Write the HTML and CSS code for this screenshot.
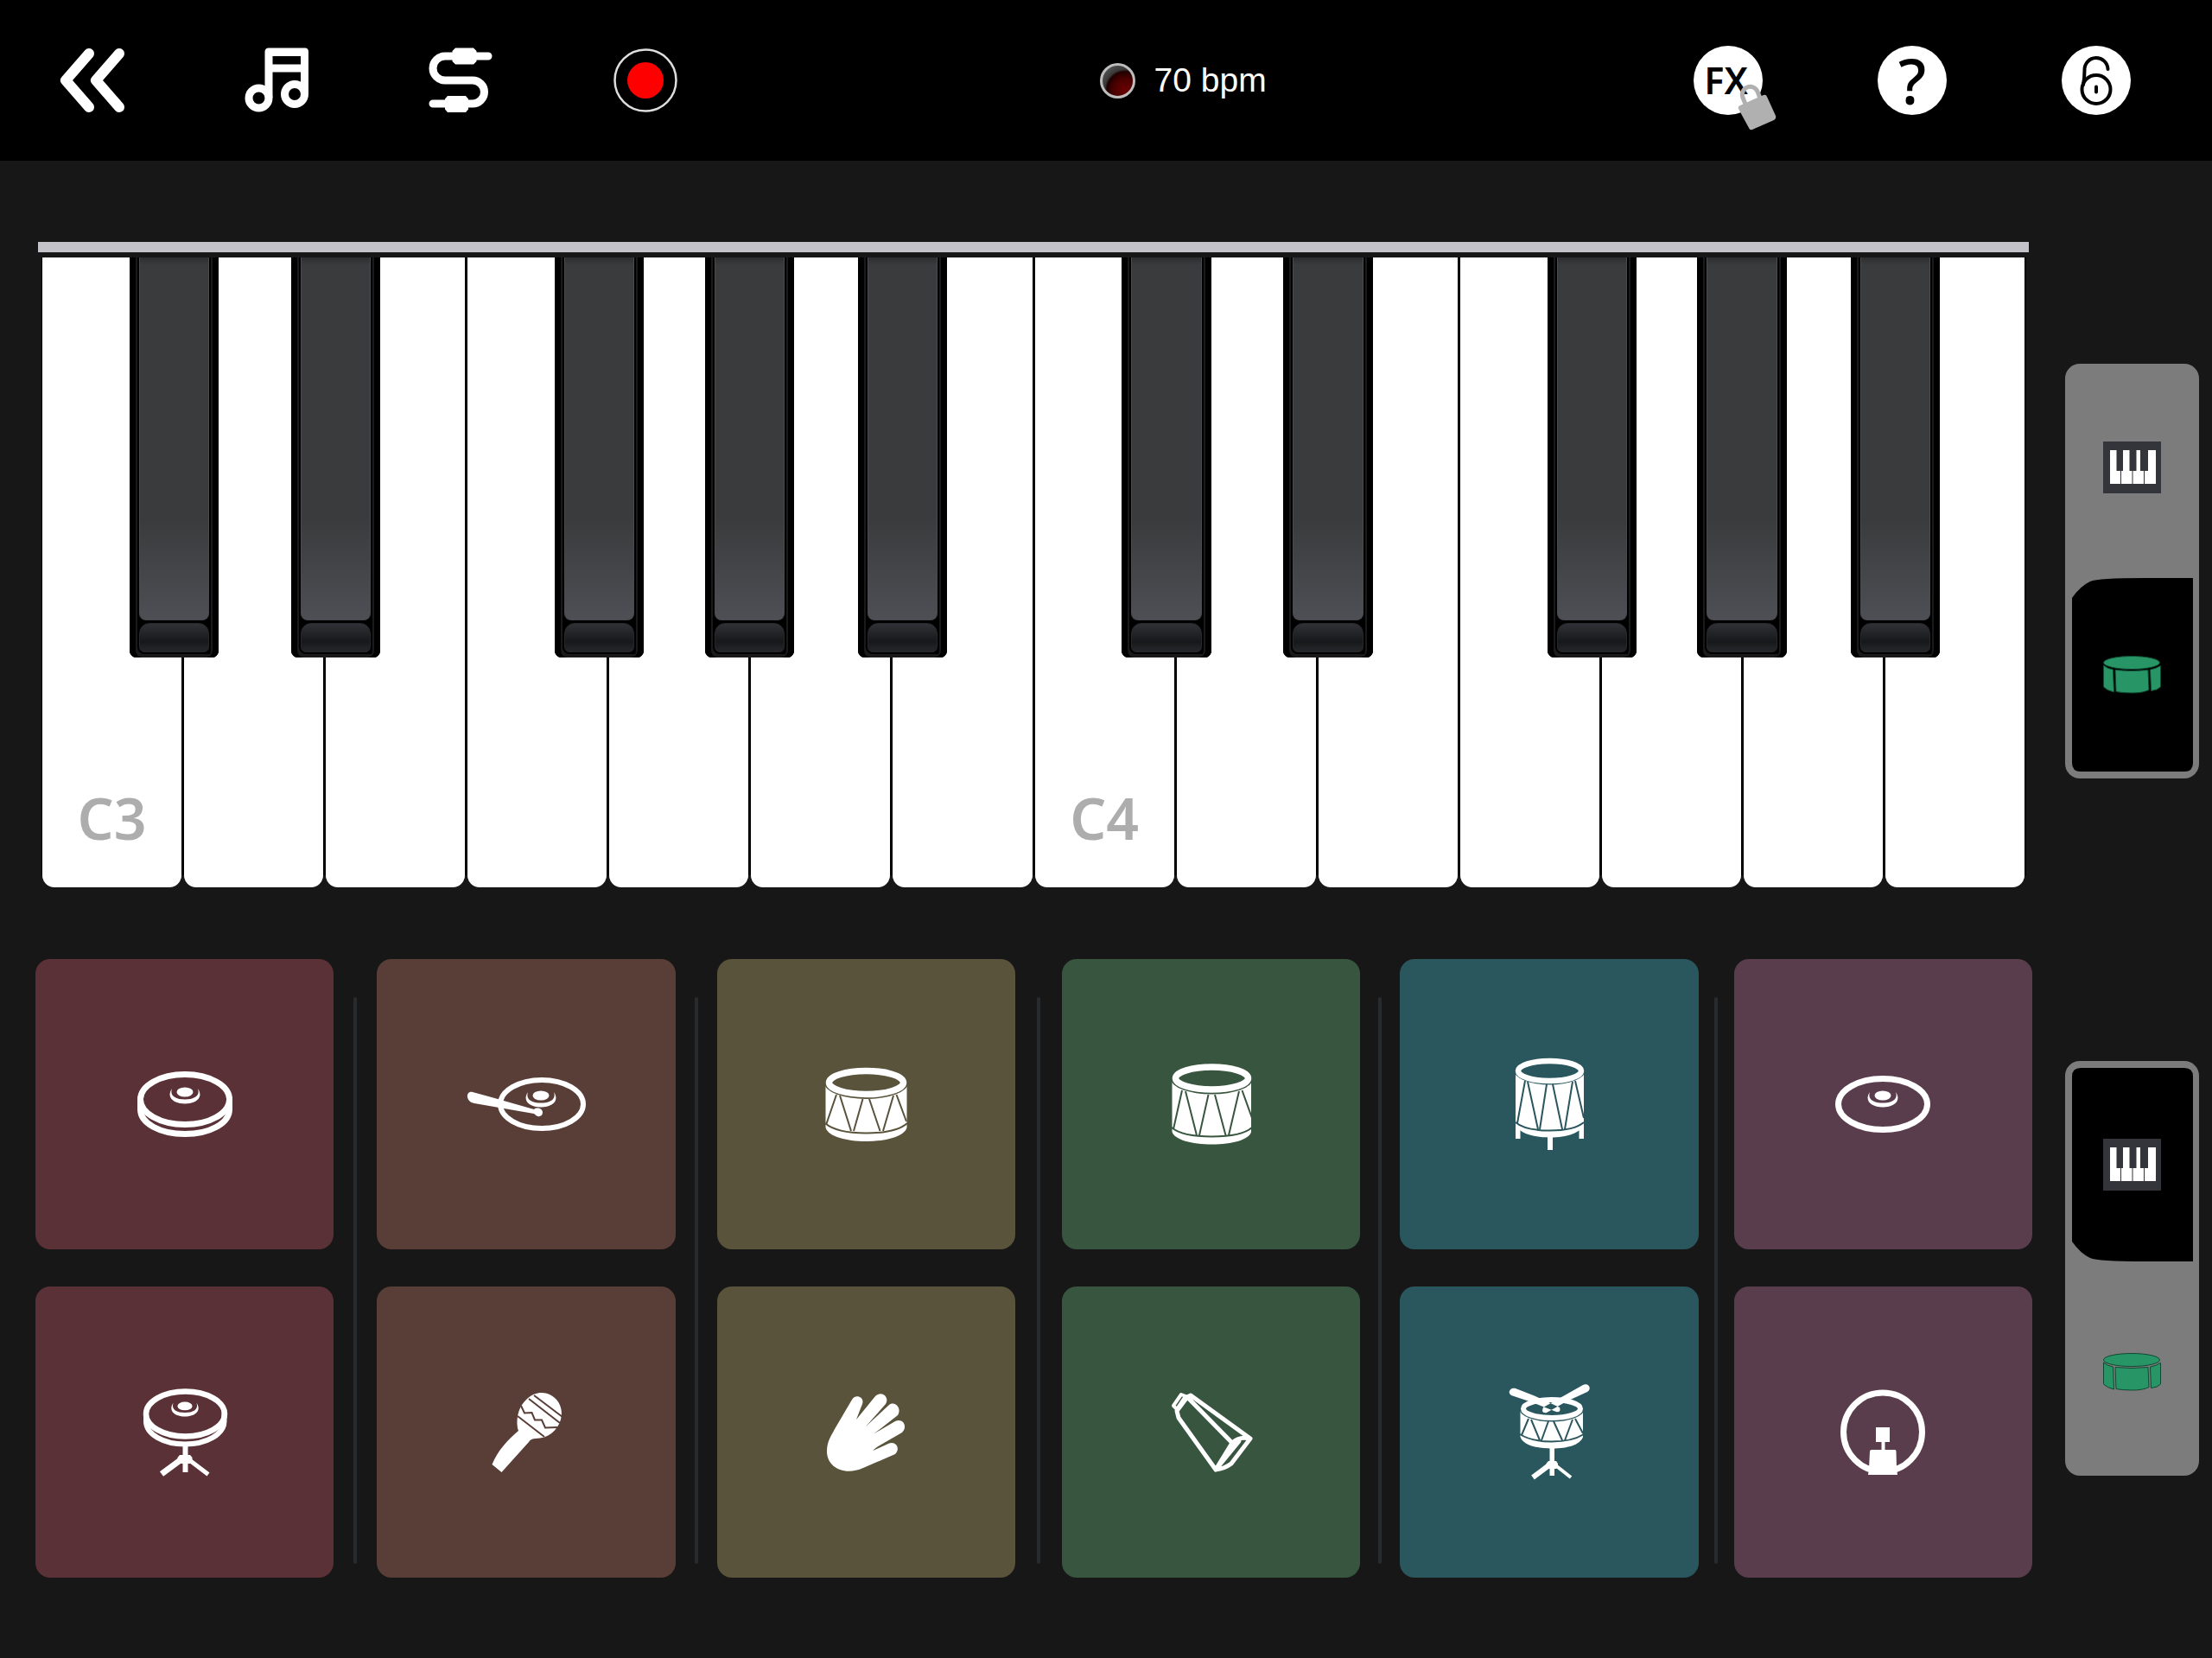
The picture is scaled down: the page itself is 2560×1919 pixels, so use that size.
FILE: index.html
```html
<!DOCTYPE html>
<html lang="en">
<head>
<meta charset="UTF-8" />
<meta name="viewport" content="width=device-width, initial-scale=1" />
<title>Piano and Drums</title>
<link rel="stylesheet" href="styles.css">
</head>
<body>
  <header class="toolbar">
    <div class="tools">
      <button class="tool" aria-label="Back">
        <svg class="tool-icon" viewBox="0 0 80 80"><path class="line" stroke-width="12" d="M36 9L9 40L36 71M71 9L44 40L71 71" /></svg>
      </button>
      <button class="tool" aria-label="Songs">
        <svg class="tool-icon" viewBox="0 0 80 80">
          <path d="M31 2.500H73Q77 2.500 77 7V56H68V30.500H35.500V60H26.500V7Q26.500 2.500 31 2.500ZM35.500 12V21.500H68V12Z" fill-rule="evenodd" />
          <circle class="line" cx="19.500" cy="60.500" r="11.500" stroke-width="9" />
          <circle class="line" cx="61" cy="56" r="11.500" stroke-width="9" />
        </svg>
      </button>
      <button class="tool" aria-label="MIDI connection">
        <svg class="tool-icon" viewBox="0 0 80 80">
          <path class="line" stroke-width="9" d="M34 12H22A14 14 0 0 0 22 40H54A13.500 13.500 0 0 1 54 67H8M34 12H72" />
          <path d="M34 2.500H55L58.500 6V18L55 21.500H34L30.500 18V6ZM25 58H46L49 61.500V73.500L46 77H25L22 73.500V61.500Z" />
        </svg>
      </button>
      <button class="tool" aria-label="Record">
        <svg class="tool-icon" viewBox="0 0 80 80">
          <circle class="line record-ring" cx="40" cy="40" r="35.500" stroke-width="2.500" />
          <circle class="record-dot" cx="40" cy="40" r="21" />
        </svg>
      </button>
    </div>

    <button class="tempo"><span class="led"></span>70 bpm</button>

    <div class="tools tools-right">
      <button class="tool" aria-label="Effects">
        <span class="disc fx">FX
          <svg class="fx-lock" viewBox="0 0 50 56">
            <path d="M13 26L9 16A9 9 0 0 1 26 9L30 19" fill="none" stroke="#b0b0b0" stroke-width="5" />
            <path d="M6 25L33 13Q36 12 37 15L47 37Q48 40 45 42L20 53Q17 54 16 51L4 29Q3 26 6 25Z" fill="#b0b0b0" />
          </svg>
        </span>
      </button>
      <button class="tool" aria-label="Help"><span class="disc help">?</span></button>
      <button class="tool" aria-label="Lock">
        <span class="disc">
          <svg class="tool-icon" viewBox="0 0 80 80">
            <g fill="none" stroke="#000" stroke-width="4" stroke-linecap="round">
              <circle cx="40" cy="50.500" r="16.500" />
              <path d="M25 45C26 40 26.500 36 26.500 28A13.500 13.500 0 0 1 53.500 27M40 47.500V53.500" />
            </g>
          </svg>
        </span>
      </button>
    </div>
  </header>

  <main>
    <section class="row row-piano">
      <div class="instrument">
        <div class="shelf"></div>
        <div class="keys">
          <div class="slot"><button class="white" aria-label="C3">C3</button><button class="black near" aria-label="C#3"><span class="top"></span><span class="lip"></span></button></div>
          <div class="slot"><button class="white" aria-label="D3"></button><button class="black far" aria-label="D#3"><span class="top"></span><span class="lip"></span></button></div>
          <div class="slot"><button class="white" aria-label="E3"></button></div>
          <div class="slot"><button class="white" aria-label="F3"></button><button class="black near" aria-label="F#3"><span class="top"></span><span class="lip"></span></button></div>
          <div class="slot"><button class="white" aria-label="G3"></button><button class="black mid" aria-label="G#3"><span class="top"></span><span class="lip"></span></button></div>
          <div class="slot"><button class="white" aria-label="A3"></button><button class="black far" aria-label="A#3"><span class="top"></span><span class="lip"></span></button></div>
          <div class="slot"><button class="white" aria-label="B3"></button></div>
          <div class="slot"><button class="white" aria-label="C4">C4</button><button class="black near" aria-label="C#4"><span class="top"></span><span class="lip"></span></button></div>
          <div class="slot"><button class="white" aria-label="D4"></button><button class="black far" aria-label="D#4"><span class="top"></span><span class="lip"></span></button></div>
          <div class="slot"><button class="white" aria-label="E4"></button></div>
          <div class="slot"><button class="white" aria-label="F4"></button><button class="black near" aria-label="F#4"><span class="top"></span><span class="lip"></span></button></div>
          <div class="slot"><button class="white" aria-label="G4"></button><button class="black mid" aria-label="G#4"><span class="top"></span><span class="lip"></span></button></div>
          <div class="slot"><button class="white" aria-label="A4"></button><button class="black far" aria-label="A#4"><span class="top"></span><span class="lip"></span></button></div>
          <div class="slot"><button class="white" aria-label="B4"></button></div>
        </div>
      </div>

      <div class="switch">
        <button class="option" aria-label="Piano on top" aria-pressed="false">
          <svg class="mini" viewBox="0 0 67 60">
            <g id="mini-piano">
              <rect width="67" height="60" fill="#34353a" />
              <path fill="#fff" d="M8 10H20V49H8ZM21 10H33.500V49H21ZM34.500 10H47V49H34.500ZM48 10H61V49H48Z" />
              <path fill="#34353a" d="M15.500 9H23V34H15.500ZM30.500 9H38.500V34H30.500ZM43 9H52V34H43Z" />
            </g>
          </svg>
        </button>
        <button class="option" aria-label="Drums on top" aria-pressed="true">
          <svg class="knob" viewBox="0 0 140 224" preserveAspectRatio="none"><path d="M0 23Q10 9 21 4Q30 0 84 0H140V214Q140 224 130 224H10Q0 224 0 214Z" /></svg>
          <svg class="mini" viewBox="0 0 67 60">
            <g id="mini-drum" fill="#289566" stroke="#0e4a31" stroke-width="1">
              <ellipse cx="33" cy="16" rx="32.500" ry="7.500" />
              <path d="M0.500 19Q5 23 11.500 24L12.500 50Q4 48 0.500 44Z" />
              <path d="M14 24.500Q33 26.500 52 24.500L53 47.500Q46 51 34 51Q22 51 15 49.500Z" />
              <path d="M54.500 24Q61 23 66.500 19.500V44Q63 48 55.500 48.500Z" />
            </g>
          </svg>
        </button>
      </div>
    </section>

    <section class="row row-pads">
      <div class="instrument pads">
        <button class="pad red" aria-label="Closed hi-hat">
          <svg class="pad-icon" viewBox="0 0 160 120">
            <path class="line" stroke-width="7" d="M28.500 54V66C28.500 82 51 94.500 80 94.500S131.500 82 131.500 66V54" />
            <ellipse class="line" cx="80" cy="54.500" rx="51.500" ry="29" stroke-width="7" />
            <g id="bell">
              <ellipse cx="80" cy="46" rx="9.500" ry="5.500" />
              <path d="M65 42C58 52 67 59.500 80 59.500S102 52 95 42C98 51 90 54.500 80 54.500S62 51 65 42Z" />
            </g>
          </svg>
        </button>
        <span class="divider"></span>
        <button class="pad brown" aria-label="Ride">
          <svg class="pad-icon" viewBox="0 0 160 120">
            <ellipse class="line" cx="98" cy="60" rx="48" ry="28" stroke-width="6" />
            <use href="#bell" x="17" y="4" />
            <path d="M18 46L40 52L89 66C92 63 99 65 99 69.500C99 74 95 75 92 73.500L89 71L20 59C9 57 10 44 18 46Z" />
          </svg>
        </button>
        <span class="divider"></span>
        <button class="pad olive" aria-label="Low tom">
          <svg class="pad-icon" viewBox="0 0 160 120">
            <path d="M33.500 35V87C36 97 57 103 80.500 103S125 97 127.500 87V35Z" />
            <ellipse class="gap" cx="80.500" cy="35.500" rx="48.500" ry="18.500" />
            <ellipse class="line" cx="80.500" cy="35" rx="43" ry="13.500" stroke-width="7.500" />
            <path class="cut" d="M33 82C42 90 60 93.500 80.500 93.500S119 90 128 82M46 49L34 84M50 50L63 91M76.500 54L66 91M84 54L96.500 91M112 50L100 91M115.500 49L127 80" />
          </svg>
        </button>
        <span class="divider"></span>
        <button class="pad green" aria-label="Mid tom">
          <svg class="pad-icon" viewBox="0 0 160 120">
            <path d="M34.500 30V92C37 101 57 106.500 80.500 106.500S124 101 126 92V30Z" />
            <ellipse class="gap" cx="80.500" cy="30.500" rx="47.500" ry="18" />
            <ellipse class="line" cx="80.500" cy="30" rx="42" ry="13" stroke-width="7.500" />
            <path class="cut" d="M34 87C42 94 60 97.500 80.500 97.500S119 94 127 87M46 44L36 89M50 45L63 96M76.500 49L66 96M84 49L96.500 96M112 45L100 96M115.500 44L127 76" />
          </svg>
        </button>
        <span class="divider"></span>
        <button class="pad teal" aria-label="Floor tom">
          <svg class="pad-icon" viewBox="0 0 160 120">
            <path d="M41 21V83C44 93 60 98.500 80.500 98.500S117 93 120 83V21Z" />
            <path d="M41 80H46.500V100H41ZM114.500 80H120V100H114.500ZM78 94H84V113H78Z" />
            <ellipse class="gap" cx="80.500" cy="21.500" rx="41" ry="16" />
            <ellipse class="line" cx="80.500" cy="21.500" rx="36.500" ry="11.500" stroke-width="6.500" />
            <path class="cut" d="M41 81C48 87 62 90.500 80.500 90.500S113 87 120 81M52 33L43 82M55 34L67 89M77 37L69 89M84 37L95 89M107 34L98 89M110 33L120 76" />
          </svg>
        </button>
        <span class="divider"></span>
        <button class="pad purple" aria-label="Crash">
          <svg class="pad-icon" viewBox="0 0 160 120">
            <ellipse class="line" cx="80" cy="60" rx="51.500" ry="29.500" stroke-width="7" />
            <use href="#bell" y="4" />
          </svg>
        </button>

        <button class="pad red" aria-label="Open hi-hat">
          <svg class="pad-icon" viewBox="0 0 160 120">
            <path class="line" stroke-width="6" d="M35 39V48C35 63 55 74.500 80 74.500S125.500 63 125.500 48V39" />
            <ellipse class="line" cx="80.500" cy="39.500" rx="45.500" ry="26" stroke-width="6.500" />
            <use href="#bell" transform="translate(8 -11) scale(.9)" />
            <path d="M77.500 76H83.500V107H77.500Z" />
            <path d="M74 87H86L88.500 90V95L86 97H74L71.500 95V90Z" />
            <path class="line butt" stroke-width="7" d="M76 92L53 109" />
            <path class="line butt" stroke-width="5" d="M84 92L107 109.500" />
          </svg>
        </button>
        <button class="pad brown" aria-label="Shaker">
          <svg class="pad-icon" viewBox="0 0 160 120">
            <path d="M70 56C68 42 72 30 81 22C89 14 101 13 109 18C119 24 123 35 120 46C116 59 105 68 91 68C87 68 85 69 83 72L51.500 107L40.500 98C47 82 58 70 71 59Z" />
            <path class="cut" d="M89 18L122 43M83 22L119 50M70 42L101 66" />
            <path class="cut" stroke-width="2.500" d="M74 30L78 38.500L86.500 38L90 46.500L98 46.500L102 55.500L116 55" />
          </svg>
        </button>
        <button class="pad olive" aria-label="Clap">
          <svg class="pad-icon" viewBox="0 0 160 120">
            <path d="M64 23C67 16 79 19 76 28L69 46L91 19C98 12 108 20 103 28L80 54L107 29C114 24 122 33 117 41L90 62L114 48C123 44 129 54 122 61L96 76C91 79 89 81 88.500 82L106 74C114 70 121 79 114 86L77 102C55 112 35 101 35 83C35 71 40 65 44 57Z" />
          </svg>
        </button>
        <button class="pad green" aria-label="Cowbell">
          <svg class="pad-icon" viewBox="0 0 160 120">
            <path class="line" stroke-width="5" d="M52 20L40 36L42 44L85 104L104 73L52 20L56 18L125 68Q112 65 104 73M125 68L103 97Q95 103 85 104L112 71" />
            <path class="line" stroke-width="4" d="M45 17L36 30L40 34L50 19Z" />
          </svg>
        </button>
        <button class="pad teal" aria-label="Snare">
          <svg class="pad-icon" viewBox="0 0 160 120">
            <path d="M46.500 34V66C49 75 64 79.500 83 79.500S116 75 119 66V34Z" />
            <ellipse class="gap" cx="83" cy="34" rx="37.500" ry="14.500" />
            <ellipse class="line" cx="83" cy="33.500" rx="33" ry="10.500" stroke-width="6" />
            <path class="cut" d="M46 63C54 68 66 71.500 83 71.500S112 68 120 63M56 45L48 64M59 46L69 70M79 48L71 70M85 48L95 70M107 46L98 70M110 45L119 62" />
            <path d="M41 10L64 19L92 32Q94 38 88 37L60 26L36 18C31 15 35 8 41 10ZM119 6L96 19L73 32Q70 39 77 38L100 25L124 14C130 10 125 3 119 6Z" />
            <path d="M80.500 78H86V111H80.500Z" />
            <path d="M79 94H88L90 97V101L88 103H79L76.500 101V97Z" />
            <path class="line butt" stroke-width="6" d="M81 98L61 113" />
            <path class="line butt" stroke-width="4" d="M86 98L105 113" />
          </svg>
        </button>
        <button class="pad purple" aria-label="Kick">
          <svg class="pad-icon" viewBox="0 0 160 120">
            <circle class="line" cx="80" cy="60.500" r="45.500" stroke-width="7" />
            <path d="M72 55H88V72H82.500V81H94Q95.500 81 95.500 83L96 103L97 110H63L64 103L65 83Q65 81 67 81H78.500V72H72Z" />
          </svg>
        </button>
      </div>

      <div class="switch">
        <button class="option" aria-label="Piano below" aria-pressed="true">
          <svg class="knob flip" viewBox="0 0 140 224" preserveAspectRatio="none"><path d="M0 23Q10 9 21 4Q30 0 84 0H140V214Q140 224 130 224H10Q0 224 0 214Z" /></svg>
          <svg class="mini" viewBox="0 0 67 60"><use href="#mini-piano" /></svg>
        </button>
        <button class="option" aria-label="Drums below" aria-pressed="false">
          <svg class="mini" viewBox="0 0 67 60"><use href="#mini-drum" /></svg>
        </button>
      </div>
    </section>
  </main>
</body>
</html>
```

FILE: styles.css
```css
* {
  box-sizing: border-box;
}

body {
  margin: 0;
  min-height: 100vh;
  background: #171717;
  font-family: "Liberation Sans", Arial, sans-serif;
}

button {
  padding: 0;
  border: none;
  background: none;
  color: inherit;
  font: inherit;
  cursor: pointer;
}

svg {
  display: block;
  overflow: visible;
}

/* Strokes shared by all icons */
.line {
  fill: none;
  stroke: #fff;
  stroke-linecap: round;
  stroke-linejoin: round;
}

.butt {
  stroke-linecap: butt;
}

/* Top bar */
.toolbar {
  display: flex;
  height: 186px;
  background: #000;
  color: #fff;
}

.tools {
  display: flex;
  width: 33.333%;
}

.tools-right {
  width: 25%;
  margin-right: 27px;
}

.tool {
  flex: 1;
  display: flex;
  justify-content: center;
  align-items: center;
}

.tool-icon {
  width: 80px;
  height: 80px;
  fill: #fff;
}

.record-ring {
  stroke: #ddd;
}

.record-dot {
  fill: #f00;
}

.tempo {
  flex: 1;
  display: flex;
  justify-content: center;
  align-items: center;
  gap: 22px;
  padding-right: 8px;
  font-size: 39px;
}

.led {
  width: 41px;
  height: 41px;
  border: 3px solid #bdbdbd;
  border-radius: 50%;
  background: radial-gradient(circle at 75% 80%, #6a0000 0, #4a0000 35%, #200000 55%, #3a3a3a 62%, #666 100%);
}

.disc {
  position: relative;
  display: flex;
  justify-content: center;
  align-items: center;
  width: 80px;
  height: 80px;
  border-radius: 50%;
  background: #fff;
  color: #000;
  font-family: "Noto Sans", sans-serif;
  line-height: 80px;
}

.fx {
  padding-right: 4px;
  font-size: 43px;
  font-weight: 600;
}

.fx-lock {
  position: absolute;
  left: 48px;
  top: 44px;
  width: 50px;
  height: 56px;
}

.help {
  font-size: 72px;
  font-weight: 500;
}

/* Instruments */
.row {
  display: flex;
  align-items: center;
  gap: 38px;
  padding: 0 15px 0 41px;
}

.row-piano {
  padding-top: 94px;
}

.row-pads {
  padding-top: 83px;
  padding-bottom: 93px;
}

.instrument {
  flex: 1;
}

.shelf {
  height: 12px;
  margin: 0 4px 6px 3px;
  background: #c4c3ca;
}

.keys {
  display: flex;
  height: 729px;
  margin: 0 7px;
  background: linear-gradient(#000, #000) no-repeat top / 100% 715px;
}

.slot {
  position: relative;
  flex: 1;
  padding: 0 2px 0 1px;
}

.white {
  display: flex;
  justify-content: center;
  align-items: flex-end;
  width: 100%;
  height: 100%;
  padding-bottom: 36px;
  border-radius: 0 0 14px 14px;
  background: #fff;
  color: #adadad;
  font-family: "Noto Sans", sans-serif;
  font-size: 66px;
  font-weight: 600;
}

.black {
  position: absolute;
  top: 0;
  z-index: 1;
  display: flex;
  flex-direction: column;
  gap: 3px;
  width: 63%;
  height: 463px;
  padding: 0 11px 6px;
  border-radius: 0 0 8px 8px;
  background: #000;
  box-shadow: inset 7px 0 0 #000, inset -7px 0 0 #000, inset 9px -4px 0 #1a1a1b, inset -9px 0 0 #1a1a1b;
}

.near {
  left: 62%;
}

.mid {
  left: 68%;
}

.far {
  left: 76%;
}

.top {
  flex: 1;
  border: 1px solid #4a4b50;
  border-top: none;
  border-radius: 0 0 8px 8px;
  background: linear-gradient(#2c2d2e, #3a3b3c 2%, #3a3b3c 72%, #4e4f55);
}

.lip {
  height: 34px;
  border: 1px solid #26272b;
  border-radius: 12px 12px 6px 6px;
  background: linear-gradient(#303136, #17181a 65%, #26272a);
}

/* Swap switches on the right */
.switch {
  display: flex;
  flex-direction: column;
  width: 155px;
  height: 480px;
  border-radius: 17px;
  background: #7c7c7c;
}

.row-piano .switch {
  margin-top: 15px;
}

.option {
  position: relative;
  flex: 1;
  display: flex;
  justify-content: center;
  align-items: center;
}

.knob {
  position: absolute;
  left: 8px;
  top: 8px;
  width: calc(100% - 15px);
  height: calc(100% - 16px);
}

.flip {
  transform: scaleY(-1);
}

.mini {
  position: relative;
  width: 67px;
  height: 60px;
}

/* Drum pads */
.pads {
  display: grid;
  grid-template-columns: 345fr 50fr 345fr 48fr 345fr 54fr 345fr 46fr 345fr 41fr 345fr;
  row-gap: 43px;
}

.pad {
  display: flex;
  justify-content: center;
  align-items: center;
  aspect-ratio: 345 / 336;
  border-radius: 17px;
  background: currentColor;
}

.pad-icon {
  width: 160px;
  height: 120px;
  fill: #fff;
}

/* Gaps in the drawings show the pad colour */
.gap {
  fill: currentColor;
}

.cut {
  fill: none;
  stroke: currentColor;
  stroke-width: 2;
}

.divider {
  grid-row: 1 / span 2;
  justify-self: center;
  width: 4px;
  margin: 44px 0 16px;
  border-radius: 2px;
  background: #282b2d;
}

.red {
  grid-column: 1;
  color: #5a3136;
}

.brown {
  grid-column: 3;
  color: #593e37;
}

.olive {
  grid-column: 5;
  color: #59533b;
}

.green {
  grid-column: 7;
  color: #38553f;
}

.teal {
  grid-column: 9;
  color: #2a565e;
}

.purple {
  grid-column: 11;
  color: #5a3d4c;
}

.red + .divider {
  grid-column: 2;
}

.brown + .divider {
  grid-column: 4;
}

.olive + .divider {
  grid-column: 6;
}

.green + .divider {
  grid-column: 8;
}

.teal + .divider {
  grid-column: 10;
}
```
